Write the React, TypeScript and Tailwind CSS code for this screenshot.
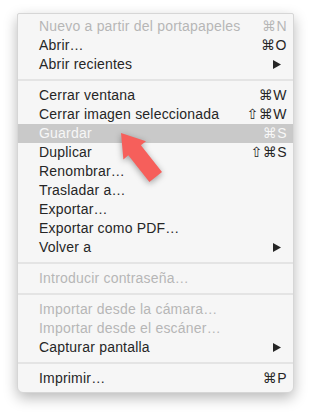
import React from "react"

type Item =
  | { kind: "sep" }
  | { kind: "item"; label: string; shortcut?: string; submenu?: boolean; disabled?: boolean; active?: boolean }

const items: Item[] = [
  { kind: "item", label: "Nuevo a partir del portapapeles", shortcut: "⌘N", disabled: true },
  { kind: "item", label: "Abrir…", shortcut: "⌘O" },
  { kind: "item", label: "Abrir recientes", submenu: true },
  { kind: "sep" },
  { kind: "item", label: "Cerrar ventana", shortcut: "⌘W" },
  { kind: "item", label: "Cerrar imagen seleccionada", shortcut: "⇧⌘W" },
  { kind: "item", label: "Guardar", shortcut: "⌘S", active: true },
  { kind: "item", label: "Duplicar", shortcut: "⇧⌘S" },
  { kind: "item", label: "Renombrar…" },
  { kind: "item", label: "Trasladar a…" },
  { kind: "item", label: "Exportar…" },
  { kind: "item", label: "Exportar como PDF…" },
  { kind: "item", label: "Volver a", submenu: true },
  { kind: "sep" },
  { kind: "item", label: "Introducir contraseña…", disabled: true },
  { kind: "sep" },
  { kind: "item", label: "Importar desde la cámara…", disabled: true },
  { kind: "item", label: "Importar desde el escáner…", disabled: true },
  { kind: "item", label: "Capturar pantalla", submenu: true },
  { kind: "sep" },
  { kind: "item", label: "Imprimir…", shortcut: "⌘P" },
]

export default function App() {
  return (
    <div className="relative w-[311px] h-[413px] bg-white overflow-hidden font-['Liberation_Sans','DejaVu_Sans',sans-serif]">
      <div className="ml-[17px] mt-[13px] w-[277px] bg-[#f6f6f6] border border-[#d6d6d6] rounded-t-[2px] rounded-b-[6px] shadow-[0_5px_14px_rgba(0,0,0,0.28)] pt-[3px] pb-[4px]">
        {items.map((item, idx) =>
          item.kind === "sep" ? (
            <div key={idx} className="h-[12px] flex items-center">
              <div className="w-full h-[2px] bg-[#e4e4e4]" />
            </div>
          ) : (
            <div
              key={idx}
              className={`h-[19px] flex items-center justify-between pl-[21px] pr-[6px] text-[14px] tracking-[0.2px] leading-[19px] ${
                item.active
                  ? "bg-[#c9c9c9] text-[#f7f7f7]"
                  : item.disabled
                  ? "text-[#b6b6b6]"
                  : "text-[#262626]"
              }`}
            >
              <span className="whitespace-nowrap">{item.label}</span>
              {item.shortcut && (
                <span className="whitespace-nowrap text-[14px] tracking-[0.5px]">{item.shortcut}</span>
              )}
              {item.submenu && (
                <svg width="8" height="9" viewBox="0 0 8 9" className="mr-[6px]">
                  <polygon points="0,0 8,4.5 0,9" fill="#262626" />
                </svg>
              )}
            </div>
          )
        )}
      </div>

      {/* red arrow pointing at Guardar */}
      <svg
        width="311"
        height="413"
        className="absolute left-0 top-0 pointer-events-none drop-shadow-[0_2px_3px_rgba(0,0,0,0.35)]"
      >
        <polygon
          points="121,133 146,141.3 140.9,145.3 162,172 149.4,182 128.3,155.3 123.4,159.5"
          fill="#f65f5b"
        />
      </svg>
    </div>
  )
}
